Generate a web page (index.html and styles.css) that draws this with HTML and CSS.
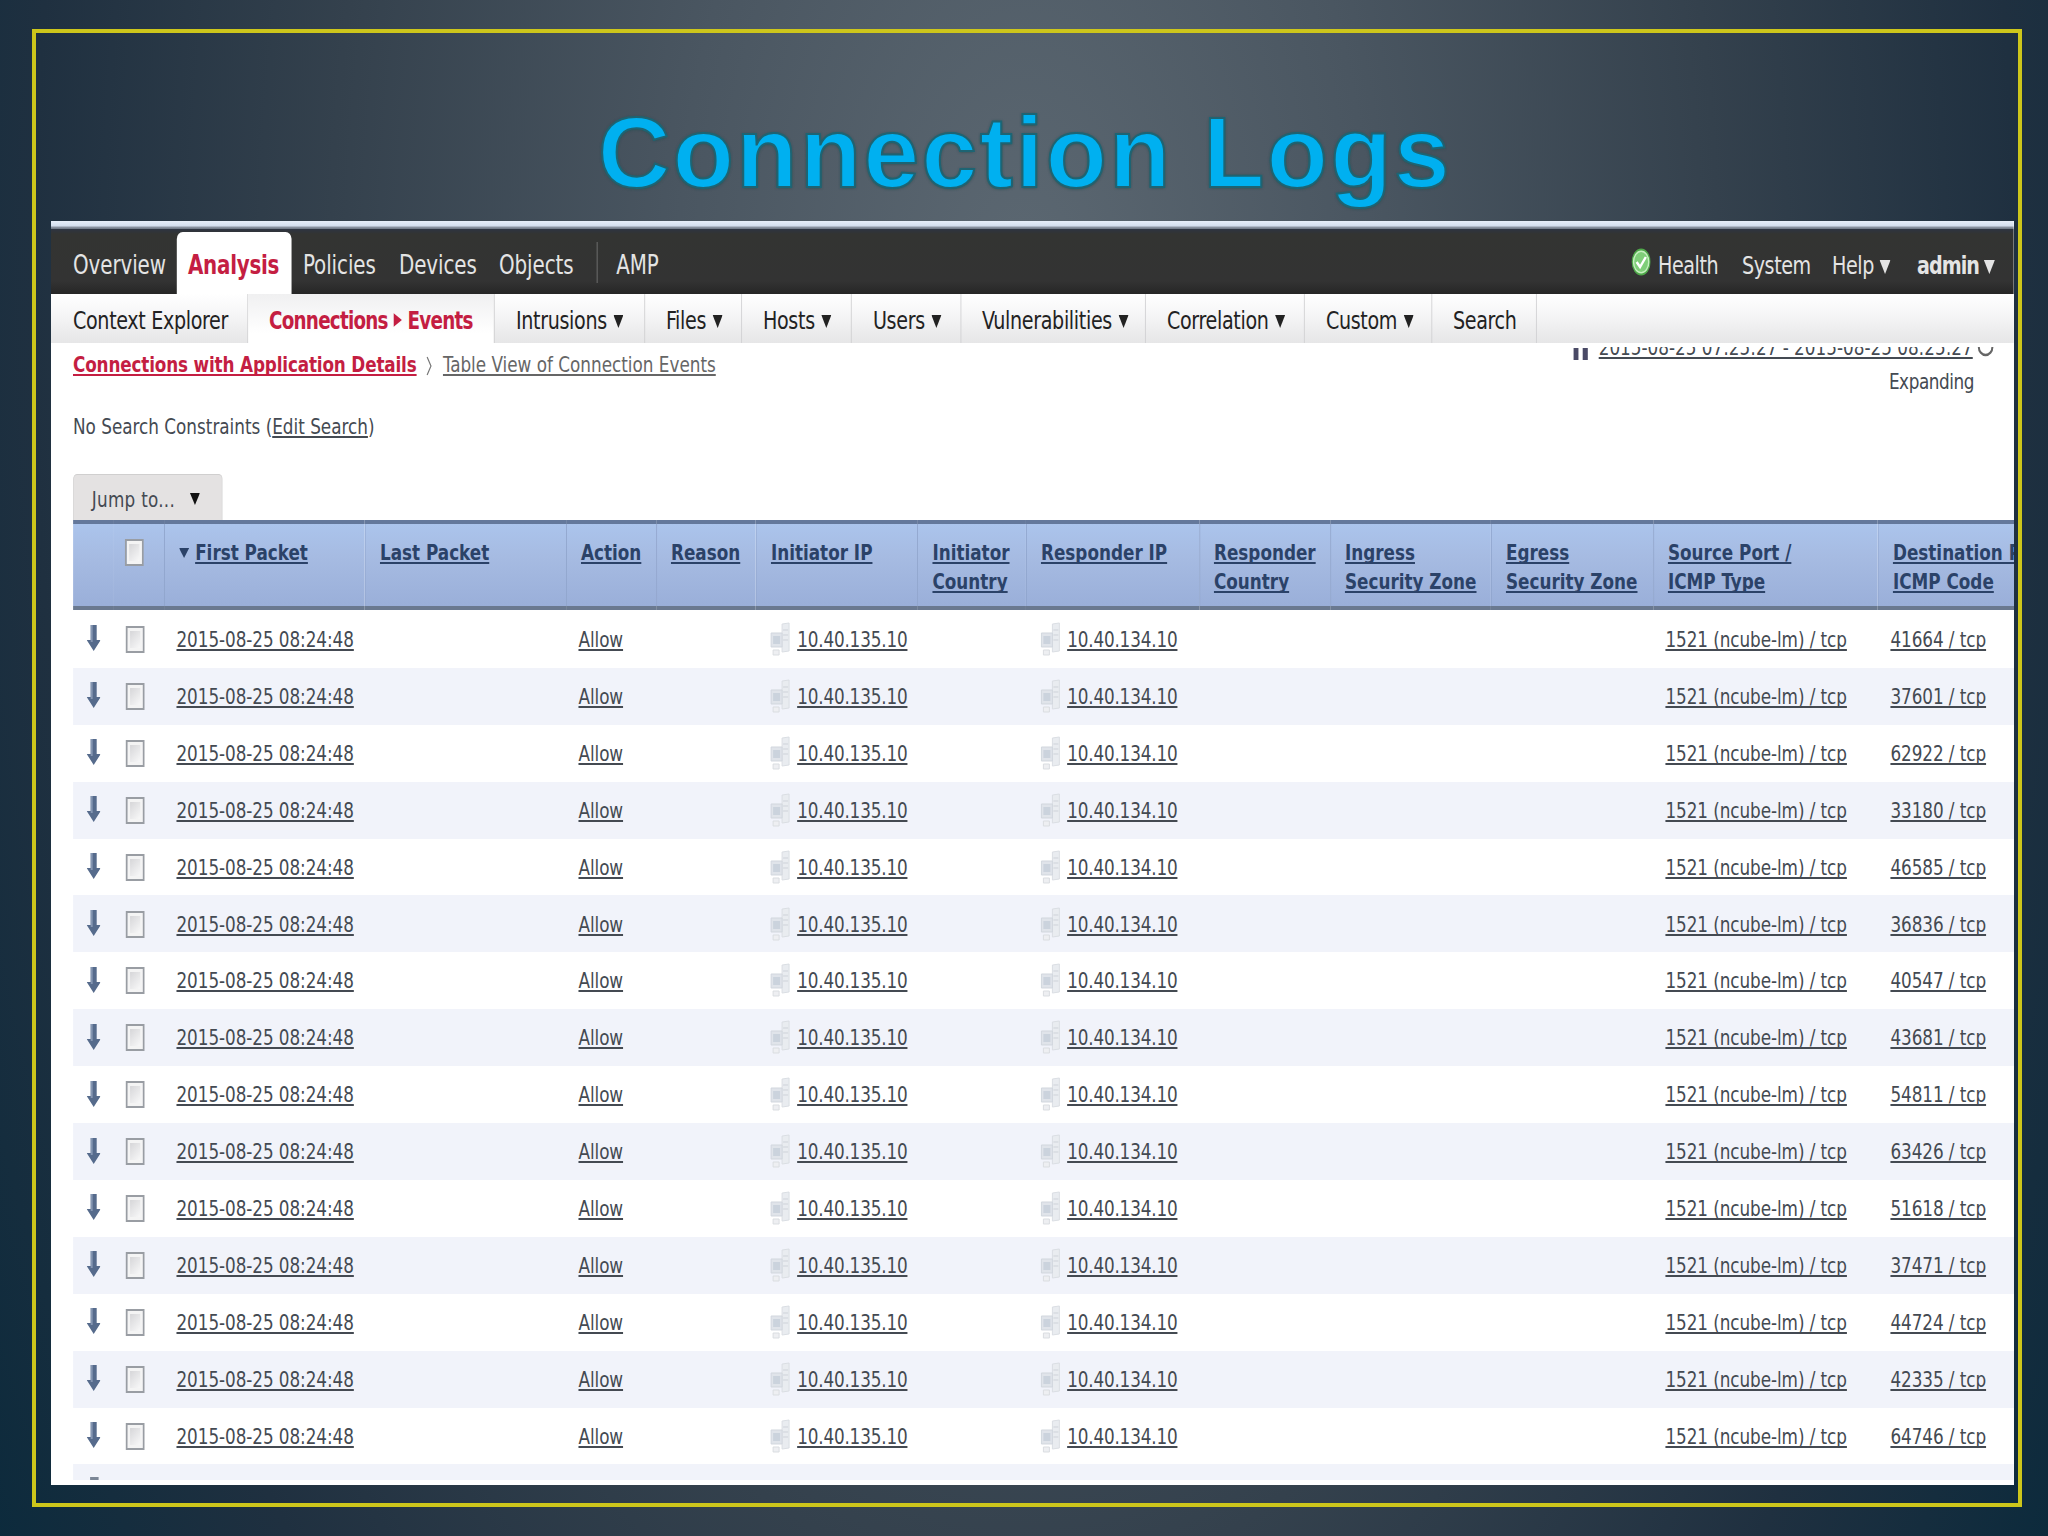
FILE: index.html
```
<!DOCTYPE html>
<html lang="en">
<head>
  <meta charset="UTF-8">
  <meta name="viewport" content="width=device-width, initial-scale=1.0">
  <title>Connection Logs</title>
  <link rel="stylesheet" href="styles.css">
</head>
<body>
  <div class="slide">
    <h1>Connection Logs</h1>
    <div class="viewport">
      <div class="app">
        <div class="window-edge"></div>
        <div class="topbar">
          <div class="menu">
            <a class="overview">Overview</a>
            <a class="analysis active">Analysis</a>
            <a class="policies">Policies</a>
            <a class="devices">Devices</a>
            <a class="objects">Objects</a>
            <span class="divider"></span>
            <a class="amp">AMP</a>
          </div>
          <div class="user-menu">
            <svg class="health-icon" viewBox="0 0 20 28" preserveAspectRatio="none">
              <ellipse cx="10" cy="14" rx="9.5" ry="13.5" fill="#4fa84a"/>
              <ellipse cx="10" cy="14" rx="7.6" ry="10.8" fill="#7fce79" stroke="#c5efbf" stroke-width="1.4"/>
              <path d="M5.5 14l3.4 5 5.8-10" fill="none" stroke="#fff" stroke-width="2.4"/>
            </svg>
            <a class="health">Health</a>
            <a class="system">System</a>
            <a class="help">Help <i class="caret"></i></a>
            <a class="admin">admin <i class="caret"></i></a>
          </div>
        </div>
        <div class="subnav">
          <a class="s-context">Context Explorer</a>
          <a class="s-connections active">Connections <i class="caret-right"></i> Events</a>
          <a class="s-intrusions">Intrusions <i class="caret"></i></a>
          <a class="s-files">Files <i class="caret"></i></a>
          <a class="s-hosts">Hosts <i class="caret"></i></a>
          <a class="s-users">Users <i class="caret"></i></a>
          <a class="s-vuln">Vulnerabilities <i class="caret"></i></a>
          <a class="s-corr">Correlation <i class="caret"></i></a>
          <a class="s-custom">Custom <i class="caret"></i></a>
          <a class="s-search">Search</a>
        </div>
        <div class="page-head">
          <div class="page-left">
            <div class="breadcrumb">
              <a class="current">Connections with Application Details</a>
              <svg class="chevron" viewBox="0 0 8 20"><path d="M1.5 1l4.5 9-4.5 9" fill="none" stroke="#777" stroke-width="1.4"/></svg>
              <a class="crumb">Table View of Connection Events</a>
            </div>
            <div class="constraints">No Search Constraints (<a>Edit Search</a>)</div>
            <div class="jump">Jump to... <i class="caret"></i></div>
          </div>
          <div class="page-right">
            <div class="time-range">
              <span class="pause"></span>
              <a>2015-08-25 07:25:27 - 2015-08-25 08:25:27</a>
              <svg class="refresh" viewBox="0 0 20 20"><circle cx="10" cy="10" r="8" fill="none" stroke="#666" stroke-width="2.4"/></svg>
            </div>
            <div class="expanding">Expanding</div>
          </div>
        </div>
        <table class="events">
          <colgroup>
            <col class="c-arrow"><col class="c-check"><col class="c-first"><col class="c-last">
            <col class="c-action"><col class="c-reason"><col class="c-init-ip"><col class="c-init-country">
            <col class="c-resp-ip"><col class="c-resp-country"><col class="c-ingress"><col class="c-egress">
            <col class="c-source"><col class="c-dest">
          </colgroup>
          <thead>
            <tr>
              <th class="plain"></th>
              <th class="plain"><span class="checkbox"></span></th>
              <th class="sorted"><i class="caret"></i><a>First Packet</a></th>
              <th><a>Last Packet</a></th>
              <th><a>Action</a></th>
              <th><a>Reason</a></th>
              <th><a>Initiator IP</a></th>
              <th><a>Initiator<br>Country</a></th>
              <th><a>Responder IP</a></th>
              <th><a>Responder<br>Country</a></th>
              <th><a>Ingress<br>Security Zone</a></th>
              <th><a>Egress<br>Security Zone</a></th>
              <th><a>Source Port /<br>ICMP Type</a></th>
              <th><a>Destination Port /<br>ICMP Code</a></th>
            </tr>
          </thead>
          <tbody id="event-rows"></tbody>
        </table>
        <div class="next-row"><span></span></div>
      </div>
    </div>
  </div>

  <script>
    const ports = [41664, 37601, 62922, 33180, 46585, 36836, 40547, 43681,
      54811, 63426, 51618, 37471, 44724, 42335, 64746];

    const arrow = '<svg class="arrow" viewBox="0 0 14 26" preserveAspectRatio="none">' +
      '<path d="M4 0h6v15h4l-7 11-7-11h4z" fill="#566b8c"/><path d="M4 0h2v17h-2z" fill="#8496b2"/></svg>';
    const host = '<svg class="host" viewBox="0 0 20 34" preserveAspectRatio="none">' +
      '<path d="M12 2l7-1v28l-7 1z" fill="#e9ecf0" stroke="#dadee3"/>' +
      '<path d="M13 8h5M13 13h5M13 18h5" stroke="#ced3da"/>' +
      '<path d="M1 11h11v14H1z" fill="#e0e4ea" stroke="#d2d7de"/>' +
      '<path d="M3 14h7v8H3z" fill="#cbd3dd"/><path d="M3 28h6v5H3z" fill="#eeeff2" stroke="#dadde1"/></svg>';

    document.getElementById('event-rows').innerHTML = ports.map(port => `
      <tr>
        <td class="icon-cell">${arrow}</td>
        <td class="icon-cell"><span class="checkbox"></span></td>
        <td><a>2015-08-25 08:24:48</a></td>
        <td></td>
        <td><a>Allow</a></td>
        <td></td>
        <td><div class="ip">${host}<a>10.40.135.10</a></div></td>
        <td></td>
        <td><div class="ip">${host}<a>10.40.134.10</a></div></td>
        <td></td>
        <td></td>
        <td></td>
        <td><a>1521 (ncube-lm) / tcp</a></td>
        <td><a>${port} / tcp</a></td>
      </tr>`).join('');
  </script>
</body>
</html>
```

FILE: styles.css
```
* {
  box-sizing: border-box;
}
body {
  margin: 0;
  width: 2048px;
  height: 1536px;
  padding: 29px 26px 28px 32px;
  overflow: hidden;
  background: radial-gradient(ellipse 1240px 2300px at 1024px 300px, #5c6872 0%, #4a5661 28%, #34414d 56%, #1f3040 80%, #0b2a3c 100%);
}
.slide {
  height: 1478px;
  border: 4px solid #cdc61b;
  padding: 0 4px 0 15px;
}
h1 {
  margin: 0;
  height: 188px;
  padding: 63px 0 0 547px;
  font-family: "Liberation Sans", Arial, sans-serif;
  font-size: 100px;
  line-height: 112px;
  letter-spacing: 2.5px;
  white-space: nowrap;
  color: #00b0f0;
  -webkit-text-stroke: 2px #1d6473;
  text-shadow: 0 0 3px #2c5356, 0 1px 3px #2c5356;
}
.viewport {
  width: 1963px;
  height: 1264px;
  overflow: hidden;
  background: #fff;
}
/* the capture is squeezed horizontally, widths below are divided by --sx */
.app {
  --sx: .85;
  width: calc(1963px / var(--sx));
  height: 1264px;
  transform: scaleX(var(--sx));
  transform-origin: 0 0;
  font-family: "DejaVu Sans Condensed", "DejaVu Sans", Tahoma, sans-serif;
  font-stretch: condensed;
  font-size: 22px;
  color: #444a52;
}
.app a {
  white-space: nowrap;
}
.window-edge {
  height: 8px;
  background: linear-gradient(#e6eef9 0, #d3deee 5px, #8f98a6 6px, #6d7683 8px);
}
.caret {
  display: inline-block;
  width: calc(11px / var(--sx));
  height: 14px;
  margin-left: -1px;
  background: currentColor;
  clip-path: polygon(0 0, 100% 0, 50% 100%);
}
.caret-right {
  display: inline-block;
  width: 10px;
  height: 14px;
  background: currentColor;
  clip-path: polygon(0 0, 100% 50%, 0 100%);
  vertical-align: 2px;
}
.topbar {
  display: flex;
  justify-content: space-between;
  height: 65px;
  background: linear-gradient(#2d3442 0, #333432 5px, #333 52px, #262626 100%);
  color: #e4e4e4;
  font-size: 26px;
  line-height: 73px;
}
.menu,
.user-menu {
  display: flex;
}
.menu {
  padding-left: calc(22px / var(--sx));
  letter-spacing: -.1px;
}
.overview { width: calc(103.5px / var(--sx)); }
.analysis { width: calc(115px / var(--sx)); }
.policies { width: calc(107.5px / var(--sx)); padding-left: calc(11.5px / var(--sx)); }
.devices { width: calc(100px / var(--sx)); }
.objects { width: calc(98px / var(--sx)); }
.menu .active {
  height: 62px;
  margin-top: 3px;
  padding-left: calc(11.5px / var(--sx));
  line-height: 67px;
  border-radius: 7px 7px 0 0;
  background: #fff;
  color: #c41e42;
  font-weight: bold;
  letter-spacing: -.3px;
}
.divider {
  width: 1px;
  height: 41px;
  margin: 13px calc(18.5px / var(--sx)) 0 0;
  background: #777;
}
.user-menu {
  font-size: 25px;
  letter-spacing: -.5px;
}
.user-menu .caret {
  margin-left: 0;
}
.health-icon {
  width: calc(20px / var(--sx));
  height: 28px;
  margin: 19px calc(7px / var(--sx)) 0 0;
}
.health { width: calc(84px / var(--sx)); }
.system { width: calc(90px / var(--sx)); }
.help { width: calc(85px / var(--sx)); }
.admin {
  width: calc(97px / var(--sx));
  font-weight: bold;
  letter-spacing: -1.1px;
}
.admin .caret {
  margin-left: -1px;
}
.subnav {
  display: flex;
  height: 49px;
  background: linear-gradient(#fff, #f6f6f7 40%, #e6e6e7);
  color: #222;
  font-size: 25px;
  line-height: 54px;
  letter-spacing: -.4px;
}
.subnav a {
  padding-left: calc(21px / var(--sx));
  border-right: 1px solid #cfcfd1;
}
.subnav .caret {
  width: calc(10px / var(--sx));
  height: 13px;
  margin-left: 1px;
  vertical-align: 1px;
}
.subnav .active {
  background: linear-gradient(#f0f0f1, #fff 80%);
  color: #c41e42;
  font-weight: bold;
  font-size: 24px;
  letter-spacing: -.9px;
}
.subnav .s-context {
  width: calc(197px / var(--sx));
  padding-left: calc(22px / var(--sx));
}
.s-connections { width: calc(247px / var(--sx)); }
.s-intrusions { width: calc(150px / var(--sx)); }
.s-files { width: calc(97px / var(--sx)); }
.s-hosts { width: calc(110px / var(--sx)); }
.s-users { width: calc(109px / var(--sx)); }
.s-vuln { width: calc(185px / var(--sx)); }
.s-corr { width: calc(159px / var(--sx)); }
.s-custom { width: calc(127px / var(--sx)); }
.s-search { width: calc(105px / var(--sx)); }
.page-head {
  display: flex;
  justify-content: space-between;
  height: 177px;
  padding-left: calc(22px / var(--sx));
}
.page-head a,
.events a {
  text-decoration: underline;
  text-decoration-thickness: 2px;
  text-underline-offset: 2px;
  text-decoration-skip-ink: none;
}
.breadcrumb {
  display: flex;
  height: 60px;
  line-height: 44px;
  color: #666;
}
.breadcrumb .current {
  color: #c41e42;
  font-weight: bold;
  letter-spacing: -.18px;
}
.chevron {
  width: 8px;
  height: 20px;
  margin: 13px 12px 0 11px;
}
.constraints {
  height: 71px;
  line-height: 48px;
}
.jump {
  width: calc(150px / var(--sx));
  height: 46px;
  padding-left: calc(18px / var(--sx));
  line-height: 50px;
  border: 1px solid #d0cfcf;
  border-bottom: 0;
  border-radius: 5px 5px 0 0;
  background: #e4e2e2;
  letter-spacing: .3px;
}
.jump .caret {
  width: calc(10px / var(--sx));
  height: 12px;
  margin-left: 11px;
  color: #111;
  vertical-align: 2px;
}
.page-right {
  padding: 4px calc(20px / var(--sx)) 0 0;
}
/* the range line is half scrolled under the navigation */
.time-range {
  display: flex;
  align-items: flex-end;
  height: 14px;
  overflow: hidden;
}
.time-range a {
  line-height: 26px;
}
.pause {
  width: calc(14px / var(--sx));
  height: 12px;
  margin: 0 calc(11px / var(--sx)) 1px 0;
  border: solid #4a4a66;
  border-width: 0 6px;
}
.refresh {
  width: 20px;
  height: 20px;
  margin: 0 0 4px 5px;
  flex-shrink: 0;
}
.expanding {
  padding-right: calc(20px / var(--sx));
  line-height: 42px;
  text-align: right;
  letter-spacing: -.5px;
}
.events {
  width: calc(2027px / var(--sx));
  margin-left: calc(22px / var(--sx));
  table-layout: fixed;
  border-collapse: separate;
  border-spacing: 0;
  background: repeating-linear-gradient(#fff 0 56.9px, #f1f3fa 56.9px 113.8px) 0 91px no-repeat;
}
.c-arrow { width: calc(40px / var(--sx)); }
.c-check { width: calc(51px / var(--sx)); }
.c-first { width: calc(201px / var(--sx)); }
.c-last { width: calc(201px / var(--sx)); }
.c-action { width: calc(90px / var(--sx)); }
.c-reason { width: calc(100px / var(--sx)); }
.c-init-ip { width: calc(161.5px / var(--sx)); }
.c-init-country { width: calc(108.5px / var(--sx)); }
.c-resp-ip { width: calc(173px / var(--sx)); }
.c-resp-country { width: calc(131px / var(--sx)); }
.c-ingress { width: calc(161px / var(--sx)); }
.c-egress { width: calc(162px / var(--sx)); }
.c-source { width: calc(225px / var(--sx)); }
.c-dest { width: calc(222px / var(--sx)); }
.events th {
  height: 90px;
  padding: 15px 0 0 calc(15px / var(--sx));
  border-top: 4px solid #64789b;
  border-bottom: 4px solid #6a7990;
  background: linear-gradient(#abc4ec, #a6bbe2 40%, #9aafd9);
  box-shadow: inset 1px 0 #8fa4cc;
  color: #2b4268;
  font-size: 22px;
  line-height: 28.5px;
  text-align: left;
  vertical-align: top;
}
.events th.plain {
  box-shadow: none;
  padding-left: calc(12px / var(--sx));
}
.events th.sorted .caret {
  width: 12px;
  height: 10px;
  margin: 0 7px 0 0;
  vertical-align: 2px;
}
.events td {
  height: 56.9px;
  padding: 1px 0 0 calc(12.5px / var(--sx));
  white-space: nowrap;
  letter-spacing: -.08px;
}
.events tbody tr:first-child td {
  height: 57.5px;
}
.checkbox {
  display: block;
  width: calc(19px / var(--sx));
  height: 27px;
  border: 2px solid #999da3;
  background: linear-gradient(135deg, #cfcfd2, #fff);
  box-shadow: inset 0 0 0 3px #f4f4f4;
}
.arrow {
  display: block;
  width: calc(14px / var(--sx));
  height: 26px;
  margin: 0 0 2px 1px;
}
.ip {
  display: flex;
  align-items: center;
  letter-spacing: -.2px;
}
.host {
  width: calc(20px / var(--sx));
  height: 34px;
  margin: -1px calc(7px / var(--sx)) 0 2px;
}
/* top of the next row, cut by the window */
.next-row {
  height: 16px;
  margin-left: calc(22px / var(--sx));
  padding: 13px 0 0 calc(17px / var(--sx));
  background: #f1f3fa;
}
.next-row span {
  display: block;
  width: 10px;
  height: 3px;
  background: #7b8696;
}
```
